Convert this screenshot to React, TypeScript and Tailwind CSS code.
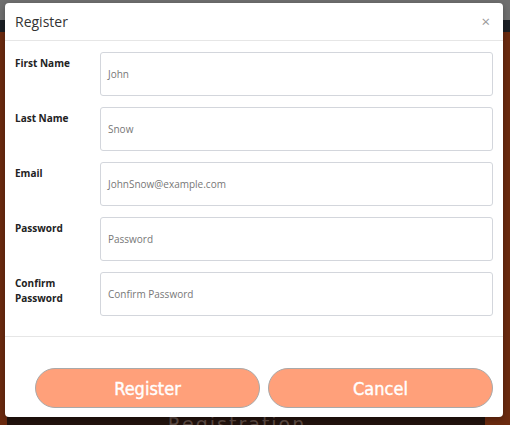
import React from "react";

const fields = [
  { label: "First Name", placeholder: "John" },
  { label: "Last Name", placeholder: "Snow" },
  { label: "Email", placeholder: "JohnSnow@example.com" },
  { label: "Password", placeholder: "Password" },
  { label: ["Confirm", "Password"], placeholder: "Confirm Password" },
];

export default function App() {
  return (
    <div className="relative w-[510px] h-[425px] overflow-hidden" style={{ fontFamily: '"Open Sans", "Noto Sans", sans-serif' }}>
      {/* background page */}
      <div className="flex flex-col h-full">
        <div className="h-[20px] bg-[#6f6f6f]" />
        <div className="h-[12px] bg-[#1b1f24]" />
        <div className="flex-1 bg-[#6b2a0f] flex flex-col justify-end pl-[7px] pr-[25px]">
          <div className="h-[60px] bg-[#22130e] flex justify-center items-end pr-[18px]">
            <div className="text-[19px] tracking-[2px] text-[#5c4a43] leading-none translate-y-[9px]" style={{ fontFamily: '"DejaVu Sans", sans-serif' }}>
              Registration
            </div>
          </div>
        </div>
      </div>

      {/* modal */}
      <div className="absolute left-[5px] top-[3px] w-[498px] h-[414px] bg-white rounded-[4px] flex flex-col shadow-[0_2px_6px_rgba(0,0,0,0.3)]">
        <div className="h-[38px] flex items-center justify-between px-[10px] border-b border-[#e6e6e6]">
          <div className="text-[14px] text-[#333] leading-none">Register</div>
          <div className="text-[15px] text-[#999] leading-none mr-[3px] -mt-[1px]">×</div>
        </div>
        <div className="flex flex-col gap-[11px] pt-[11px] pb-[20px] px-[10px] border-b border-[#e6e6e6]">
          {fields.map((f, i) => (
            <div key={i} className="flex">
              <div className="w-[85px] pt-[4px] text-[10px] font-bold text-[#222] leading-[15px]">
                {Array.isArray(f.label) ? (
                  <>
                    <div>{f.label[0]}</div>
                    <div>{f.label[1]}</div>
                  </>
                ) : (
                  f.label
                )}
              </div>
              <div className="flex-1 h-[44px] border border-[#d3d6dc] rounded-[3px] flex items-center px-[7px]">
                <span className="text-[10px] text-[#777777]">{f.placeholder}</span>
              </div>
            </div>
          ))}
        </div>
        <div className="flex-1 flex items-end gap-[8px] pl-[30px] pr-[10px] pb-[9px]">
          {["Register", "Cancel"].map((t) => (
            <div
              key={t}
              className="flex-1 h-[40px] rounded-full bg-[#ffa07a] border border-[#a9a9a9] flex items-center justify-center text-white text-[18px] font-normal [-webkit-text-stroke:0.4px_white]"
              style={{ fontFamily: '"DejaVu Sans Condensed", sans-serif' }}
            >
              {t}
            </div>
          ))}
        </div>
      </div>
    </div>
  );
}
